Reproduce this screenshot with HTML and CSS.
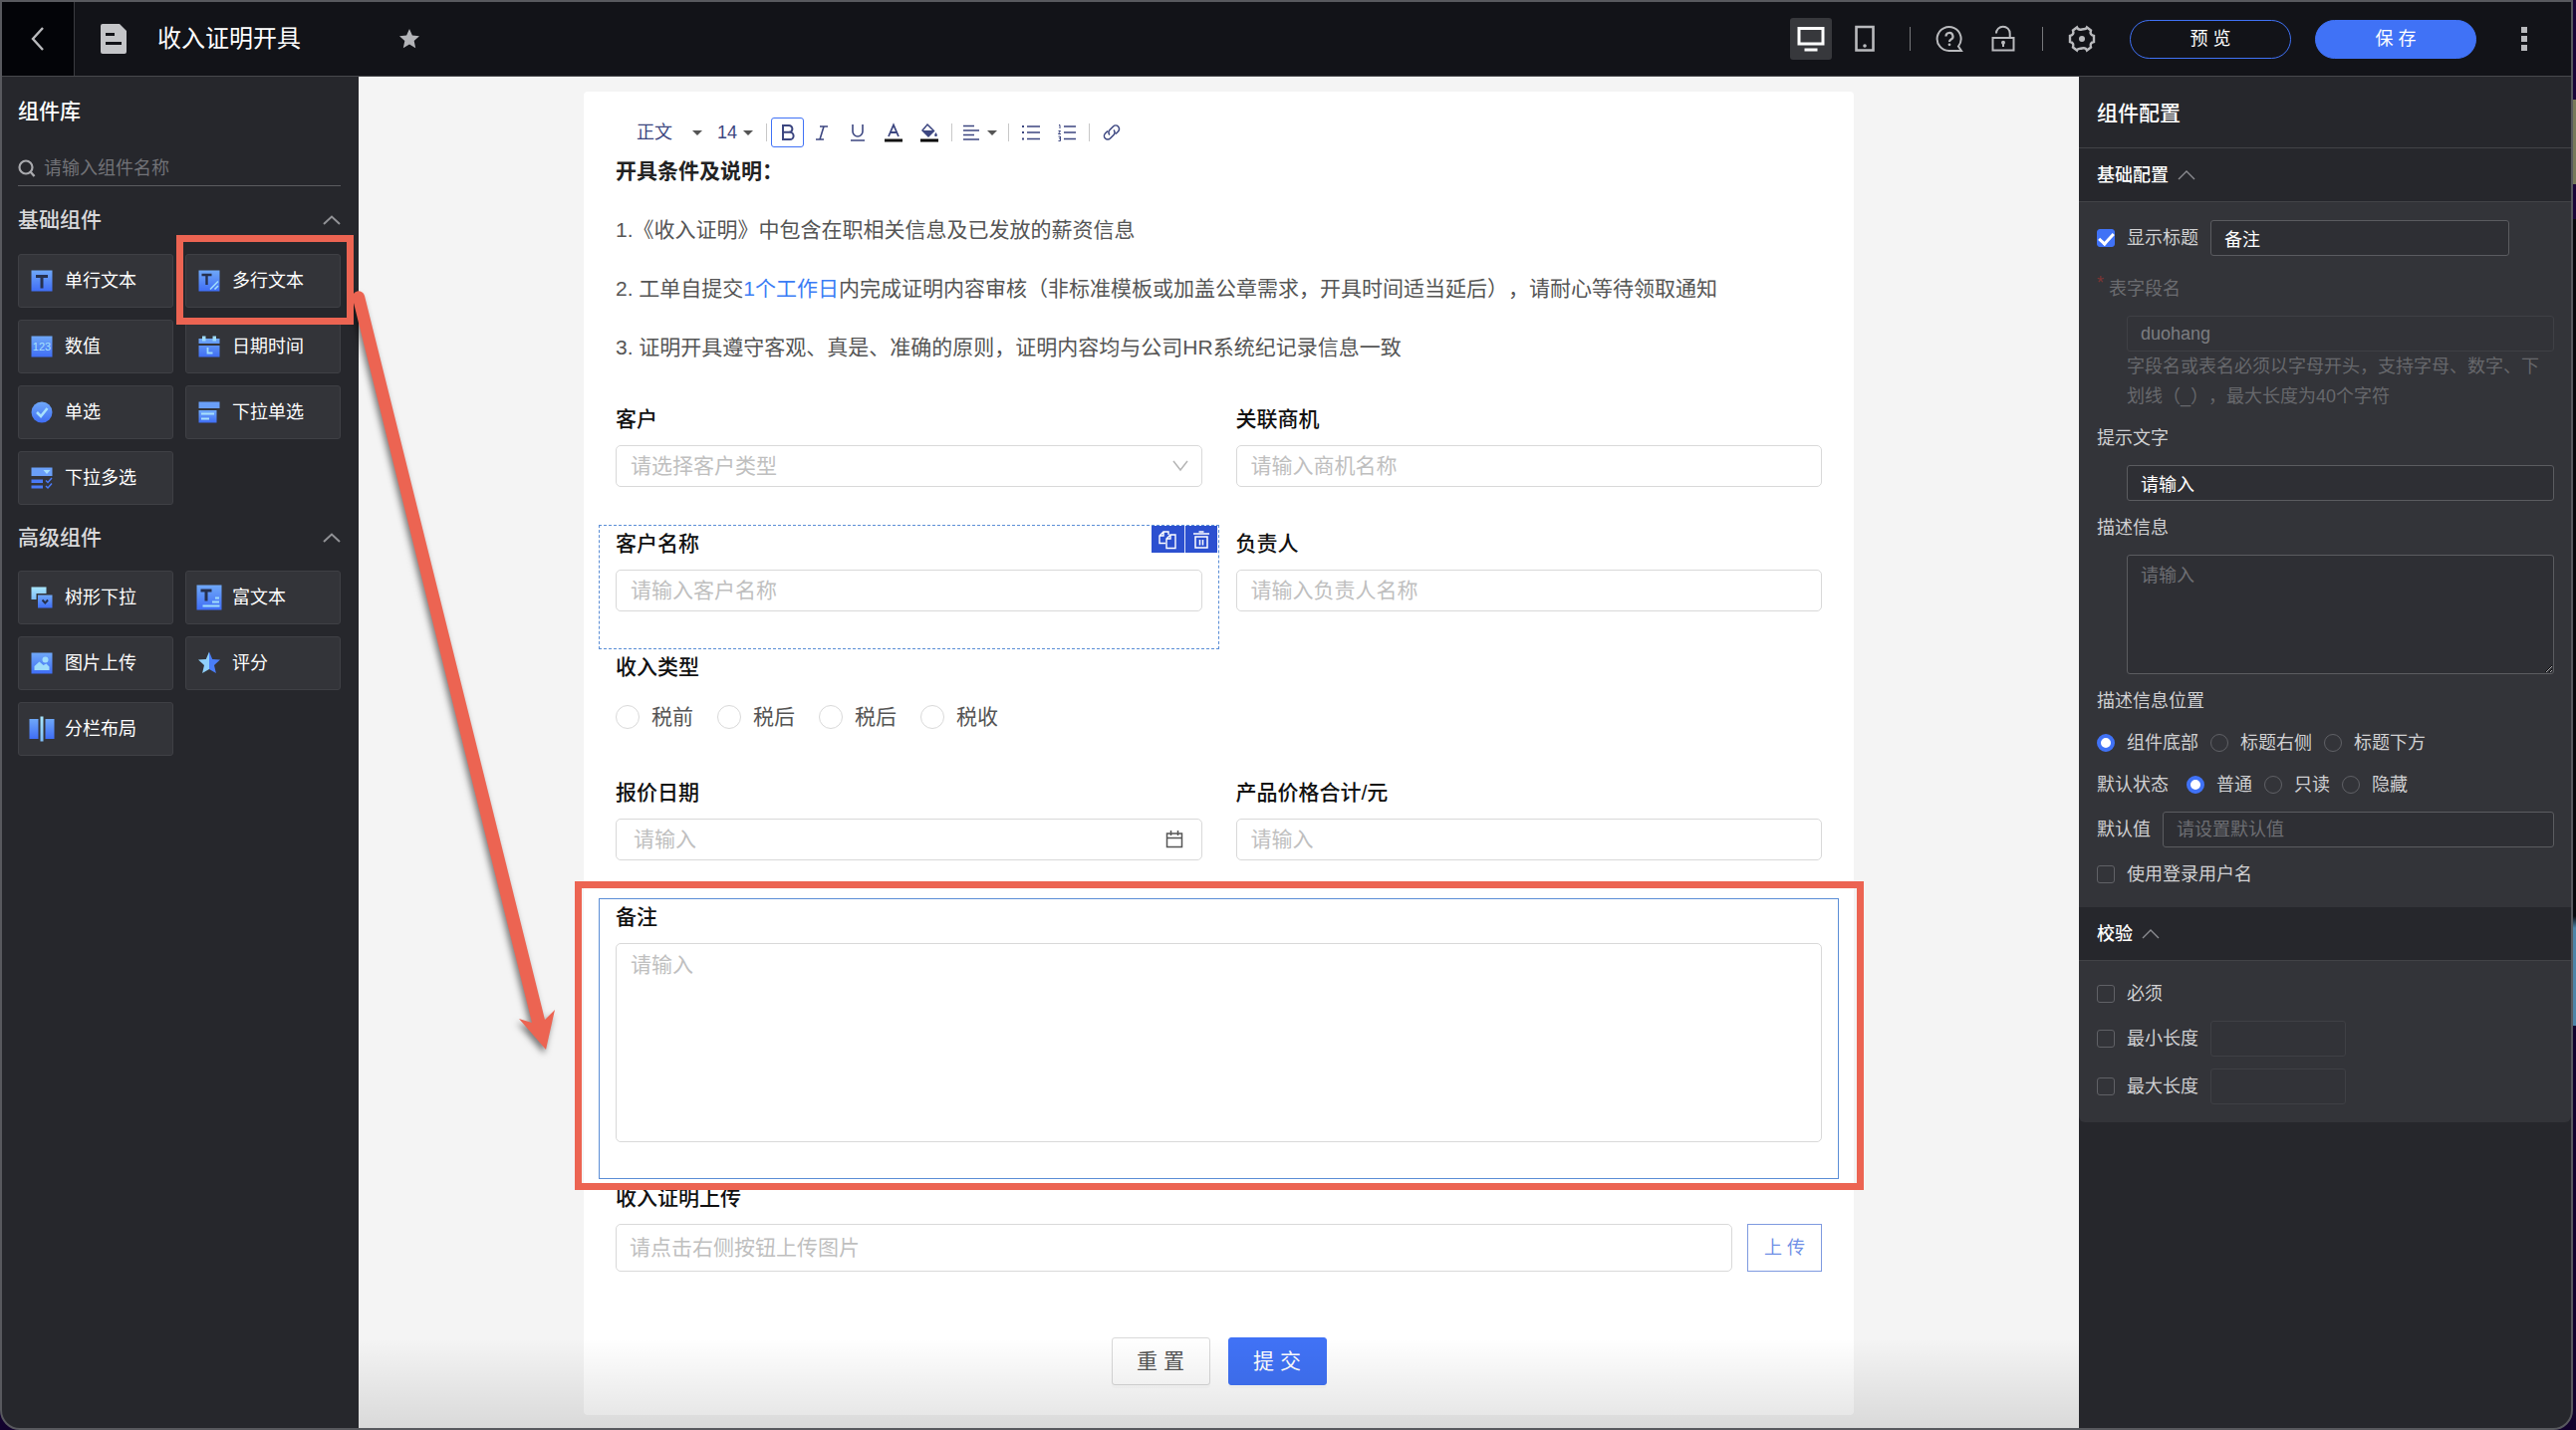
FILE: index.html
```html
<!DOCTYPE html>
<html lang="zh-CN">
<head>
  <meta charset="UTF-8" />
  <meta name="viewport" content="width=device-width, initial-scale=1.0"/>
  <title>收入证明开具</title>
  <link rel="stylesheet" href="styles.css">
</head>
<body>
  <!-- shared gradients for the component icons -->
  <svg class="defs" width="0" height="0" aria-hidden="true">
    <defs>
      <linearGradient id="blue" x1="0" y1="0" x2="0" y2="1">
        <stop offset="0" stop-color="#6fa8f8"/>
        <stop offset="1" stop-color="#3f6df5"/>
      </linearGradient>
      <linearGradient id="cyan" x1="0" y1="0" x2="0" y2="1">
        <stop offset="0" stop-color="#a8e6fd"/>
        <stop offset="1" stop-color="#7fbdf9"/>
      </linearGradient>
    </defs>
  </svg>

  <div class="window">
    <header class="topbar">
      <button class="back" aria-label="返回">
        <svg width="16" height="26" viewBox="0 0 16 26"><path d="M13 2 L3 13 L13 24" fill="none" stroke="#b9babd" stroke-width="2.4"/></svg>
      </button>
      <svg class="file-icon" width="26" height="30" viewBox="0 0 26 30"><path d="M2 0H19L26 7V28a2 2 0 0 1-2 2H2a2 2 0 0 1-2-2V2a2 2 0 0 1 2-2z" fill="#c4c5c8"/><path d="M5 9h9v3H5zM5 18h16v3H5z" fill="#121318"/></svg>
      <h1>收入证明开具</h1>
      <svg class="star" width="20" height="20" viewBox="0 0 20 20"><path d="M10 0l2.9 6.6 7.1.7-5.3 4.8 1.5 7.1L10 15.600l-6.200 3.600 1.500-7.100L0 7.300l7.100-.7z" fill="#b3b4b8"/></svg>

      <div class="actions">
        <div class="devices">
          <button class="icon-btn active" aria-label="桌面端">
            <svg width="28" height="28" viewBox="0 0 28 28"><path d="M2 3.500h24v15.500H2z" fill="none" stroke="#fff" stroke-width="3"/><path d="M7.500 23.500h13v3h-13z" fill="#fff"/></svg>
          </button>
          <button class="icon-btn" aria-label="移动端">
            <svg width="28" height="28" viewBox="0 0 28 28"><path d="M5.500 2h17v23.500h-17z" fill="none" stroke="#b9babd" stroke-width="2.600"/><circle cx="14" cy="21" r="1.800" fill="#b9babd"/></svg>
          </button>
        </div>
        <span class="divider"></span>
        <button class="icon-btn" aria-label="帮助">
          <svg width="28" height="28" viewBox="0 0 28 28"><path d="M23 21.500A12 12 0 1 0 14 26h12z" fill="none" stroke="#b9babd" stroke-width="2"/><path d="M10.500 11.500a3.500 3.500 0 1 1 5.200 3c-1.200.7-1.700 1.200-1.700 2.500" fill="none" stroke="#b9babd" stroke-width="2.200"/><circle cx="14" cy="19.800" r="1.400" fill="#b9babd"/></svg>
        </button>
        <button class="icon-btn" aria-label="锁定">
          <svg width="28" height="28" viewBox="0 0 28 28"><path d="M3.500 13h21v12.500h-21z" fill="none" stroke="#b9babd" stroke-width="2"/><path d="M7 8.500a6.700 6.700 0 0 1 13.700 0V13" fill="none" stroke="#b9babd" stroke-width="2"/><circle cx="14" cy="17.800" r="2" fill="#b9babd"/><path d="M13 18h2v4h-2z" fill="#b9babd"/></svg>
        </button>
        <span class="divider"></span>
        <button class="icon-btn" aria-label="设置">
          <svg width="28" height="28" viewBox="0 0 28 28"><path d="M9 2.500c1 2.500 3 2.500 5 2s4 .5 5-2l4 3c-1 3 0 5 3 5.500v6c-3 .5-4 2.500-3 5.500l-4 3c-1-2.500-3-2.500-5-2s-4-.5-5 2l-4-3c1-3 0-5-3-5.500v-6c3-.5 4-2.500 3-5.500z" fill="none" stroke="#b9babd" stroke-width="2.400"/><circle cx="14" cy="14" r="3" fill="#b9babd"/></svg>
        </button>
        <div class="pills">
          <button class="pill">预 览</button>
          <button class="pill pill-primary">保 存</button>
        </div>
        <button class="icon-btn" aria-label="更多">
          <svg width="6" height="24" viewBox="0 0 6 24"><path d="M0 0h6v6H0zM0 9h6v6H0zM0 18h6v6H0z" fill="#b9babd"/></svg>
        </button>
      </div>
    </header>

    <div class="workspace">
      <aside class="library">
        <h2>组件库</h2>
        <div class="search">
          <svg width="18" height="18" viewBox="0 0 18 18"><circle cx="8" cy="8" r="6.500" fill="none" stroke="#a9aaae" stroke-width="2.200"/><path d="M12.500 12.500L16.500 17" stroke="#a9aaae" stroke-width="2.400"/></svg>
          <input type="text" placeholder="请输入组件名称" aria-label="搜索组件">
        </div>

        <div class="group-title">
          <h3>基础组件</h3>
          <svg width="18" height="10" viewBox="0 0 18 10"><path d="M1 9L9 1.500L17 9" fill="none" stroke="#919296" stroke-width="2"/></svg>
        </div>
        <div class="tiles">
          <button class="tile"><svg width="26" height="26" viewBox="0 0 26 26"><path d="M2.500 2.500h21v21h-21z" fill="url(#blue)"/><path d="M7 8.500h12M13 8.500v12" stroke="#26314f" stroke-width="3"/></svg>单行文本</button>
          <button class="tile"><svg width="26" height="26" viewBox="0 0 26 26"><path d="M2.500 2.500h21v21h-21z" fill="url(#blue)"/><path d="M5.500 7h10M10.500 7v10" stroke="#26314f" stroke-width="2.400"/><path d="M14 21.500l8-8M18.500 21.500l3.500-3.500" stroke="#9fdcfb" stroke-width="1.600"/></svg>多行文本<span class="mark mark-tile"></span></button>
          <button class="tile"><svg width="26" height="26" viewBox="0 0 26 26"><path d="M2.500 2.500h21v21h-21z" fill="url(#blue)"/><text x="13" y="17" text-anchor="middle" font-size="11" fill="#a8e0fc">123</text></svg>数值</button>
          <button class="tile"><svg width="26" height="26" viewBox="0 0 26 26"><path d="M2.500 5h21v5h-21zM2.500 12h21v11.500h-21z" fill="url(#blue)"/><path d="M6 2.500h3.500v5H6zM16.500 2.500H20v5h-3.500z" fill="#9fdcfb"/><path d="M11.500 14v5.500h5" fill="none" stroke="#9fdcfb" stroke-width="1.800"/></svg>日期时间</button>
          <button class="tile"><svg width="26" height="26" viewBox="0 0 26 26"><circle cx="13" cy="13" r="10.500" fill="url(#blue)"/><path d="M8 13l4 4 6.500-8" fill="none" stroke="#a8e0fc" stroke-width="2.600"/></svg>单选</button>
          <button class="tile"><svg width="26" height="26" viewBox="0 0 26 26"><path d="M2.500 2.500h21V9h-21z" fill="#6a9ff8"/><path d="M2.500 11h18v12.500h-18z" fill="url(#blue)"/><path d="M5 14.500h13M5 19.500h8" stroke="#a8e0fc" stroke-width="1.800"/></svg>下拉单选</button>
          <button class="tile"><svg width="26" height="26" viewBox="0 0 26 26"><path d="M2.500 2.500h21V11h-21z" fill="#6a9ff8"/><path d="M14.500 5h7L18 9z" fill="#a8e0fc"/><path d="M2.500 14.500H14v3.500H2.500zM2.500 20.500H14V23.500H2.500z" fill="#4a7af7"/><path d="M17 15.500l2 2 4-4.500M17 21l2 2 4-4.500" fill="none" stroke="#4a7af7" stroke-width="1.500"/></svg>下拉多选</button>
        </div>

        <div class="group-title">
          <h3>高级组件</h3>
          <svg width="18" height="10" viewBox="0 0 18 10"><path d="M1 9L9 1.500L17 9" fill="none" stroke="#919296" stroke-width="2"/></svg>
        </div>
        <div class="tiles">
          <button class="tile"><svg width="26" height="26" viewBox="0 0 26 26"><path d="M2.500 2.500h15V9H7.500v6h-5z" fill="url(#cyan)"/><path d="M9 10.500h14.500v13H9z" fill="url(#blue)"/><path d="M13.500 15.500l2.800 3 2.800-3" fill="none" stroke="#26314f" stroke-width="2"/></svg>树形下拉</button>
          <button class="tile"><svg width="26" height="26" viewBox="0 0 26 26"><path d="M.5.500h25v25H.5z" fill="url(#blue)"/><path d="M4.500 6h11M10 6v10.500" stroke="#26314f" stroke-width="3"/><path d="M19 13.500h4M16 17.500h7M6.500 21.500h17" stroke="#9fdcfb" stroke-width="2"/></svg>富文本</button>
          <button class="tile"><svg width="26" height="26" viewBox="0 0 26 26"><path d="M2.500 2.500h21v21h-21z" fill="url(#blue)"/><circle cx="16.500" cy="9.500" r="3" fill="#9fdcfb"/><path d="M5.500 20v-4l5-4.500 4 3.500 3-1.500 3 3V20z" fill="#9fdcfb"/></svg>图片上传</button>
          <button class="tile"><svg width="26" height="26" viewBox="0 0 26 26"><path d="M13 1.500l3.200 7.500 7.800.6-6 5.300 1.900 8.100L13 19z" fill="#4a7df7"/><path d="M13 1.500L9.800 9 2 9.600l6 5.300L6.100 23 13 19z" fill="#8fd0fb"/></svg>评分</button>
          <button class="tile"><svg width="26" height="26" viewBox="0 0 26 26"><path d="M.5 3H9.500v20H.5zM16.500 3h9v20h-9z" fill="url(#blue)"/><path d="M11.500.5h3v25h-3z" fill="url(#cyan)"/></svg>分栏布局</button>
        </div>
      </aside>

      <main class="canvas">
        <form class="card">
          <div class="toolbar">
            <button type="button" class="tool tool-style">正文 <i class="caret"></i></button>
            <button type="button" class="tool tool-size">14 <i class="caret"></i></button>
            <span class="sep"></span>
            <button type="button" class="tool tool-on" aria-label="加粗"><svg width="20" height="20" viewBox="0 0 20 20"><path d="M5 3h6a3.400 3.400 0 0 1 0 6.800H5zM5 9.800h7a3.600 3.600 0 0 1 0 7.200H5z" fill="none" stroke="#3c4680" stroke-width="2"/></svg></button>
            <button type="button" class="tool" aria-label="斜体"><svg width="20" height="20" viewBox="0 0 20 20"><path d="M8 4h8M4 17h8M12 4L8 17" fill="none" stroke="#3c4680" stroke-width="1.600"/></svg></button>
            <button type="button" class="tool" aria-label="下划线"><svg width="20" height="20" viewBox="0 0 20 20"><path d="M5 2v7a5 5 0 0 0 10 0V2M3 18h14" fill="none" stroke="#3c4680" stroke-width="1.600"/></svg></button>
            <button type="button" class="tool" aria-label="文字颜色"><svg width="20" height="20" viewBox="0 0 20 20"><path d="M5 14L10 2.500L15 14M7 10h6" fill="none" stroke="#3c4680" stroke-width="1.800"/><path d="M1 16.500h18v3H1z" fill="#111"/></svg></button>
            <button type="button" class="tool" aria-label="背景颜色"><svg width="20" height="20" viewBox="0 0 20 20"><path d="M8 2l6.500 6.500-5.500 5.500-6-6z" fill="none" stroke="#3c4680" stroke-width="1.500"/><path d="M3 8h11.500L9 14z" fill="#3c4680"/><path d="M16.500 10c2 2.500 1.500 4 0 4s-2-1.500 0-4z" fill="#3c4680"/><path d="M1 16.500h18v3H1z" fill="#000"/></svg></button>
            <span class="sep"></span>
            <button type="button" class="tool tool-align" aria-label="对齐"><svg width="16" height="20" viewBox="0 0 16 20"><path d="M0 3.500h11M0 8h16M0 12.500h11M0 17h16" stroke="#3c4680" stroke-width="1.500"/></svg><i class="caret"></i></button>
            <span class="sep"></span>
            <button type="button" class="tool" aria-label="无序列表"><svg width="20" height="20" viewBox="0 0 20 20"><path d="M6 4h13M6 10h13M6 16.500h13" stroke="#3c4680" stroke-width="1.500"/><path d="M1 3h2v2H1zM1 9h2v2H1zM1 15.500h2v2H1z" fill="#3c4680"/></svg></button>
            <button type="button" class="tool" aria-label="有序列表"><svg width="20" height="20" viewBox="0 0 20 20"><path d="M7 4h12M7 10h12M7 16.500h12" stroke="#3c4680" stroke-width="1.500"/><path d="M2 2.500h1V6M1.500 8.500h2L1.500 11.500h2.500M1.500 14h2v4.500h-2M2 16h1.500" fill="none" stroke="#3c4680"/></svg></button>
            <span class="sep"></span>
            <button type="button" class="tool" aria-label="链接"><svg width="20" height="20" viewBox="0 0 20 20"><path d="M8 12.500a3.500 3.500 0 0 1 0-5L11.500 4a3.400 3.400 0 0 1 5 5L14 11.500M12 7.500a3.500 3.500 0 0 1 0 5L8.500 16a3.400 3.400 0 0 1-5-5L6 8.500" fill="none" stroke="#3c4680" stroke-width="1.500"/></svg></button>
          </div>

          <div class="notes">
            <p class="notes-title">开具条件及说明：</p>
            <p>1.《收入证明》中包含在职相关信息及已发放的薪资信息</p>
            <p>2. 工单自提交<em>1个工作日</em>内完成证明内容审核（非标准模板或加盖公章需求，开具时间适当延后），请耐心等待领取通知</p>
            <p>3. 证明开具遵守客观、真是、准确的原则，证明内容均与公司HR系统纪记录信息一致</p>
          </div>

          <div class="fields">
            <div class="field">
              <label for="customer">客户</label>
              <div class="control">
                <select id="customer"><option>请选择客户类型</option></select>
                <svg class="suffix" width="16" height="12" viewBox="0 0 16 12"><path d="M1 1L8 10L15 1" fill="none" stroke="#b5b5b5" stroke-width="1.500"/></svg>
              </div>
            </div>
            <div class="field">
              <label for="chance">关联商机</label>
              <input type="text" id="chance" placeholder="请输入商机名称">
            </div>
            <div class="field hovered">
              <label for="customerName">客户名称</label>
              <input type="text" id="customerName" placeholder="请输入客户名称">
              <div class="field-tools">
                <button type="button" aria-label="复制"><svg width="20" height="20" viewBox="0 0 20 20"><path d="M8 13.500H2V6l4-4h5v3M6 2v4H2M9 18.500V9l4-4h5v13.500zM13 5v4H9" fill="none" stroke="#fff" stroke-width="1.400"/></svg></button>
                <button type="button" aria-label="删除"><svg width="20" height="20" viewBox="0 0 20 20"><path d="M2 4h16M7.500 2h5M4 7h12v11H4zM8.500 10v5.500M11.500 10v5.500" fill="none" stroke="#fff" stroke-width="1.500"/></svg></button>
              </div>
            </div>
            <div class="field">
              <label for="owner">负责人</label>
              <input type="text" id="owner" placeholder="请输入负责人名称">
            </div>
            <fieldset class="field wide">
              <legend>收入类型</legend>
              <div class="radios">
                <label><input type="radio" name="income">税前</label>
                <label><input type="radio" name="income">税后</label>
                <label><input type="radio" name="income">税后</label>
                <label><input type="radio" name="income">税收</label>
              </div>
            </fieldset>
            <div class="field">
              <label for="quoteDate">报价日期</label>
              <div class="control date">
                <input type="text" id="quoteDate" placeholder="请输入">
                <svg class="suffix" width="18" height="18" viewBox="0 0 18 18"><path d="M1.500 3h15v13.500h-15zM1.500 7.500h15M5.500 0v5M12.500 0v5" fill="none" stroke="#555" stroke-width="1.500"/></svg>
              </div>
            </div>
            <div class="field">
              <label for="total">产品价格合计/元</label>
              <input type="text" id="total" placeholder="请输入">
            </div>
            <div class="field wide selected">
              <label for="remark">备注</label>
              <textarea id="remark" placeholder="请输入"></textarea>
              <span class="mark mark-field"></span>
            </div>
            <div class="field wide upload">
              <label for="proof">收入证明上传</label>
              <div class="upload-row">
                <input type="text" id="proof" placeholder="请点击右侧按钮上传图片">
                <button type="button" class="upload-btn">上 传</button>
              </div>
            </div>
          </div>

          <div class="form-actions">
            <button type="reset" class="btn">重 置</button>
            <button type="submit" class="btn btn-primary">提 交</button>
          </div>
        </form>
      </main>

      <aside class="config">
        <h2>组件配置</h2>
        <div class="config-title">
          <h3>基础配置</h3>
          <svg width="18" height="10" viewBox="0 0 18 10"><path d="M1 9L9 1L17 9" fill="none" stroke="#8b8c91" stroke-width="1.400"/></svg>
        </div>
        <div class="config-body">
          <div class="row">
            <label><input type="checkbox" checked>显示标题</label>
            <input type="text" class="title-input" value="备注" aria-label="标题">
          </div>
          <label class="name required" for="fieldName">表字段名</label>
          <input type="text" class="indent" id="fieldName" value="duohang" disabled>
          <p class="help">字段名或表名必须以字母开头，支持字母、数字、下划线（_），最大长度为40个字符</p>
          <label class="name" for="hint">提示文字</label>
          <input type="text" class="indent" id="hint" value="请输入">
          <label class="name" for="desc">描述信息</label>
          <textarea class="indent" id="desc" placeholder="请输入"></textarea>
          <p class="name">描述信息位置</p>
          <div class="row">
            <label><input type="radio" name="pos" checked>组件底部</label>
            <label><input type="radio" name="pos">标题右侧</label>
            <label><input type="radio" name="pos">标题下方</label>
          </div>
          <div class="row">
            <span class="state-name">默认状态</span>
            <label><input type="radio" name="state" checked>普通</label>
            <label><input type="radio" name="state">只读</label>
            <label><input type="radio" name="state">隐藏</label>
          </div>
          <div class="row">
            <label for="defaultValue">默认值</label>
            <input type="text" class="grow" id="defaultValue" placeholder="请设置默认值">
          </div>
          <div class="row">
            <label><input type="checkbox">使用登录用户名</label>
          </div>
        </div>
        <div class="config-title">
          <h3>校验</h3>
          <svg width="18" height="10" viewBox="0 0 18 10"><path d="M1 9L9 1L17 9" fill="none" stroke="#8b8c91" stroke-width="1.400"/></svg>
        </div>
        <div class="config-body last">
          <div class="row">
            <label><input type="checkbox">必须</label>
          </div>
          <div class="row">
            <label><input type="checkbox">最小长度</label>
            <input type="text" class="length" aria-label="最小长度" disabled>
          </div>
          <div class="row">
            <label><input type="checkbox">最大长度</label>
            <input type="text" class="length" aria-label="最大长度" disabled>
          </div>
        </div>
      </aside>
    </div>

    <!-- arrow from the dragged component to its place in the form -->
    <svg class="arrow" width="240" height="800" viewBox="0 0 240 800">
      <path d="M14 20 A6 6 0 0 1 26 17 L207 744 L217 734 L208 774 L181 743 L194 747 Z" fill="#ec6452"/>
    </svg>
  </div>
</body>
</html>
```

FILE: styles.css
```css
:root {
  --primary: #4072f6;
  --mark: #ec6452;
  --panel: #26272c;
  --panel-light: #333439;
  --line: #424347;
}
* {
  box-sizing: border-box;
}
body {
  margin: 0;
  padding-right: 3px;
  font-family: "Liberation Sans", "Noto Sans CJK SC", sans-serif;
  font-size: 18px;
  line-height: 30px;
  text-spacing-trim: space-all;
  background: linear-gradient(#1a0438 100px, #77795a 100px 185px, #1a0438 185px 220px, #08080c 220px 920px, #4d84a8 932px 1030px, #12022e 1030px);
}
h1, h2, h3, p {
  margin: 0;
  font-weight: normal;
}
button, input, select, textarea {
  font: inherit;
  color: inherit;
}
button {
  padding: 0;
  border: none;
  background: none;
  cursor: pointer;
}
svg {
  display: block;
  flex: none;
}
.defs {
  position: absolute;
}
.window {
  position: relative;
  display: flex;
  flex-direction: column;
  min-height: 100vh;
  border: 2px solid #58595e;
  border-radius: 0 0 20px 20px;
  background: var(--panel);
  overflow: hidden;
}

/* top bar */
.topbar {
  display: flex;
  align-items: center;
  height: 75px;
  border-bottom: 1px solid #47484c;
  background: #121318;
  color: #fff;
}
.back {
  display: flex;
  align-items: center;
  justify-content: center;
  width: 73px;
  height: 100%;
  border-right: 1px solid #3a3b40;
  background: #030408;
}
.file-icon {
  margin-left: 26px;
}
.topbar h1 {
  margin-left: 31px;
  font-size: 24px;
}
.star {
  margin-left: 99px;
}
.actions {
  display: flex;
  align-items: center;
  gap: 12px;
  margin-left: auto;
  padding-right: 26px;
}
.devices {
  display: flex;
  gap: 12px;
  margin-right: 6px;
}
.icon-btn {
  display: flex;
  align-items: center;
  justify-content: center;
  width: 42px;
  height: 42px;
  border-radius: 3px;
}
.icon-btn.active {
  background: #37383c;
}
.divider {
  width: 1px;
  height: 24px;
  margin: 0 6px;
  background: #77787c;
}
.pills {
  display: flex;
  gap: 24px;
  margin: 0 15px;
}
.pill {
  width: 162px;
  height: 39px;
  border: 1px solid var(--primary);
  border-radius: 20px;
}
.pill-primary {
  background: var(--primary);
}

.workspace {
  display: flex;
  flex: 1;
}

/* component library */
.library {
  flex: none;
  width: 358px;
  padding: 20px 18px 20px 16px;
  color: #fff;
}
.library h2, .library h3 {
  font-size: 21px;
  font-weight: 500;
}
.search {
  display: flex;
  align-items: center;
  height: 36px;
  margin-top: 24px;
  border-bottom: 1px solid #5b5c60;
}
.search input {
  flex: 1;
  min-width: 0;
  margin-left: 8px;
  padding: 0;
  border: none;
  background: none;
}
.search input::placeholder {
  color: #727378;
  opacity: 1;
}
.group-title {
  display: flex;
  align-items: center;
  justify-content: space-between;
  height: 68px;
  color: #d8d8da;
}
.tiles + .group-title {
  height: 66px;
}
.tiles {
  display: grid;
  grid-template-columns: 1fr 1fr;
  gap: 12px;
}
.tile {
  position: relative;
  display: flex;
  align-items: center;
  gap: 10px;
  height: 54px;
  padding-left: 10px;
  border: 1px solid #3f4045;
  border-radius: 3px;
  background: var(--panel-light);
}

/* form canvas */
.canvas {
  position: relative;
  flex: 1;
  min-width: 0;
  padding: 15px 226px 12px;
  background: #f4f4f4;
}
.canvas::after {
  content: "";
  position: absolute;
  left: 0;
  right: 0;
  bottom: 0;
  height: 90px;
  background: linear-gradient(transparent, rgba(0, 0, 0, 0.11));
  pointer-events: none;
}
.card {
  padding: 26px 15px 30px;
  border-radius: 4px;
  background: #fff;
}
.toolbar {
  display: flex;
  align-items: center;
  height: 30px;
  padding-left: 38px;
  color: #3c4680;
}
.tool {
  display: flex;
  align-items: center;
  justify-content: center;
  width: 36px;
  height: 30px;
}
.tool-style {
  justify-content: space-between;
  width: 66px;
}
.tool-size {
  justify-content: space-between;
  width: 36px;
  margin: 0 9px 0 15px;
}
.tool-on {
  width: 33px;
  border: 1px solid var(--primary);
  border-radius: 3px;
}
.tool-align {
  gap: 8px;
  width: 48px;
}
.caret {
  border: 5px solid transparent;
  border-top-color: #555;
  border-bottom: 0;
}
.sep {
  width: 1px;
  height: 18px;
  margin: 0 4px;
  background: #c8c8c8;
}
.notes {
  padding: 9px 17px 0;
  font-size: 21px;
  color: #555;
}
.notes p {
  margin-bottom: 29px;
}
.notes .notes-title {
  font-weight: bold;
  color: #222;
}
.notes em {
  font-style: normal;
  color: #3b7cf5;
}
.fields {
  display: grid;
  grid-template-columns: 1fr 1fr;
  margin-top: 38px;
  font-size: 21px;
}
.field {
  position: relative;
  min-width: 0;
  height: 125px;
  margin: 0;
  padding: 0 16px;
  border: 1px solid transparent;
}
.field > label, .field legend {
  display: block;
  height: 44px;
  padding: 0;
  line-height: 36px;
  font-weight: 500;
  color: #111;
}
.wide {
  grid-column: 1 / -1;
}
.field input[type=text], .field select, .field textarea {
  display: block;
  width: 100%;
  height: 42px;
  padding: 0 14px;
  border: 1px solid #d9d9d9;
  border-radius: 5px;
  background: #fff;
}
.field select {
  appearance: none;
  color: #bfbfbf;
}
.field ::placeholder {
  color: #bfbfbf;
  opacity: 1;
}
.control {
  display: flex;
  align-items: center;
}
.suffix {
  margin: 0 14px 0 -30px;
}
.field .date input {
  padding-left: 17px;
}
.date .suffix {
  margin: 0 19px 0 -37px;
}
.hovered {
  border: 1px dashed #5b8ed6;
}
.field-tools {
  position: absolute;
  top: 0;
  right: 1px;
  display: flex;
  background: #2c50d0;
}
.field-tools button {
  display: flex;
  align-items: center;
  justify-content: center;
  width: 33px;
  height: 27px;
}
.field-tools button + button {
  border-left: 1px solid #dfe6fa;
}
.radios {
  display: flex;
  align-items: center;
  gap: 24px;
  height: 48px;
  color: #555;
}
.radios label {
  display: flex;
  align-items: center;
  gap: 12px;
}
.radios input {
  appearance: none;
  width: 24px;
  height: 24px;
  margin: 0;
  border: 1px solid #d9d9d9;
  border-radius: 50%;
}
.selected {
  height: 282px;
  border: 1px solid #5b8ed6;
}
.field textarea {
  height: 200px;
  padding: 6px 14px;
  resize: none;
}
.upload {
  height: 159px;
}
.upload-row {
  display: flex;
  gap: 15px;
}
.field .upload-row input {
  flex: 1;
  min-width: 0;
  height: 48px;
  padding: 0 13px;
}
.upload-btn {
  width: 75px;
  border: 1px solid #7f9ae0;
  font-size: 18px;
  color: #6f8fe6;
}
.form-actions {
  display: flex;
  justify-content: center;
  gap: 18px;
}
.btn {
  width: 99px;
  height: 48px;
  border: 1px solid #d9d9d9;
  border-radius: 3px;
  background: #fff;
  box-shadow: 0 3px 0 rgba(0, 0, 0, 0.02);
  font-size: 21px;
  color: #555;
}
.btn-primary {
  border-color: var(--primary);
  background: var(--primary);
  color: #fff;
}

/* component settings */
.config {
  flex: none;
  width: 494px;
  color: #d0d0d2;
}
.config h2 {
  height: 72px;
  padding-left: 18px;
  border-bottom: 1px solid var(--line);
  font-size: 21px;
  font-weight: 500;
  line-height: 74px;
  color: #fff;
}
.config-title {
  display: flex;
  align-items: center;
  gap: 9px;
  height: 54px;
  padding-left: 18px;
  border-bottom: 1px solid var(--line);
  color: #fff;
}
.config h3 {
  font-size: 18px;
  font-weight: 500;
}
.config-body {
  padding: 18px 17px 18px 18px;
  background: var(--panel-light);
}
.config-body.last {
  border-radius: 0 0 6px 6px;
}
.row {
  display: flex;
  align-items: center;
  gap: 12px;
}
.row + .row {
  margin-top: 12px;
}
.row label {
  display: flex;
  align-items: center;
  gap: 12px;
}
.state-name {
  margin-right: 6px;
}
.name {
  display: block;
  margin: 12px 0;
}
.required {
  margin-top: 18px;
  color: #6b6c70;
}
.required::before {
  content: "*";
  margin-right: 5px;
  vertical-align: 6px;
  line-height: 1;
  color: #7d3534;
}
.config input[type=text], .config textarea {
  display: block;
  height: 36px;
  padding: 0 13px;
  border: 1px solid #5b5c60;
  border-radius: 3px;
  background: #2e2f34;
  color: #fff;
}
.config input[type=text]:disabled {
  border-color: #3f4045;
  background: #323338;
  color: #7c7d81;
}
.config ::placeholder {
  color: #6d6e73;
  opacity: 1;
}
.config .indent {
  width: calc(100% - 30px);
  margin-left: 30px;
}
.config textarea.indent {
  height: 120px;
  padding-top: 5px;
  color-scheme: dark;
}
.config .title-input {
  width: 300px;
}
.config .length {
  width: 136px;
}
.grow {
  flex: 1;
  min-width: 0;
}
.help {
  margin-left: 30px;
  color: #67686c;
}
.config input[type=checkbox], .config input[type=radio] {
  appearance: none;
  width: 18px;
  height: 18px;
  margin: 0;
  border: 1px solid #606166;
  border-radius: 3px;
}
.config input[type=radio] {
  border-radius: 50%;
}
.config input[type=radio]:checked {
  border: 4px solid var(--primary);
  background: #fff;
}
.config input[type=checkbox]:checked {
  display: flex;
  justify-content: center;
  border-color: var(--primary);
  background: var(--primary);
}
.config input[type=checkbox]:checked::before {
  content: "";
  width: 6px;
  height: 12px;
  border: solid #fff;
  border-width: 0 3px 3px 0;
  transform: rotate(42deg);
}

/* red marks over the page */
.mark {
  position: absolute;
  z-index: 1;
  border: 7px solid var(--mark);
  pointer-events: none;
}
.mark-tile {
  inset: -20px -14px -18px -10px;
}
.mark-field {
  inset: -18px -26px -12px -25px;
}
.arrow {
  position: absolute;
  left: 338px;
  top: 278px;
  filter: drop-shadow(-2px 4px 3px rgba(0, 0, 0, 0.5));
  pointer-events: none;
}
```
